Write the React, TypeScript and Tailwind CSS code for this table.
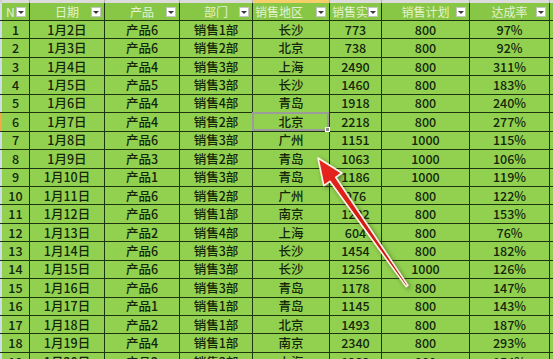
import React from "react";

const cols = "grid-cols-[2px_28px_75px_75px_73px_77px_52px_88px_80px_3px]";

const headers = ["N", "日期", "产品", "部门", "销售地区", "销售实", "销售计划", "达成率"];

const rows: string[][] = [
  ["1", "1月2日", "产品6", "销售1部", "长沙", "773", "800", "97%"],
  ["2", "1月3日", "产品6", "销售2部", "北京", "738", "800", "92%"],
  ["3", "1月4日", "产品4", "销售3部", "上海", "2490", "800", "311%"],
  ["4", "1月5日", "产品5", "销售3部", "长沙", "1460", "800", "183%"],
  ["5", "1月6日", "产品4", "销售4部", "青岛", "1918", "800", "240%"],
  ["6", "1月7日", "产品4", "销售2部", "北京", "2218", "800", "277%"],
  ["7", "1月8日", "产品6", "销售3部", "广州", "1151", "1000", "115%"],
  ["8", "1月9日", "产品3", "销售2部", "青岛", "1063", "1000", "106%"],
  ["9", "1月10日", "产品1", "销售3部", "青岛", "1186", "1000", "119%"],
  ["10", "1月11日", "产品6", "销售2部", "广州", "976", "800", "122%"],
  ["11", "1月12日", "产品6", "销售1部", "南京", "1222", "800", "153%"],
  ["12", "1月13日", "产品2", "销售4部", "上海", "604", "800", "76%"],
  ["13", "1月14日", "产品6", "销售3部", "长沙", "1454", "800", "182%"],
  ["14", "1月15日", "产品6", "销售3部", "长沙", "1256", "1000", "126%"],
  ["15", "1月16日", "产品6", "销售3部", "青岛", "1178", "800", "147%"],
  ["16", "1月17日", "产品1", "销售1部", "青岛", "1145", "800", "143%"],
  ["17", "1月18日", "产品2", "销售1部", "北京", "1493", "800", "187%"],
  ["18", "1月19日", "产品4", "销售1部", "南京", "2340", "800", "293%"],
  ["19", "1月20日", "产品2", "销售3部", "上海", "1232", "800", "154%"],
];

function FilterButton() {
  return (
    <span className="absolute bottom-[3px] right-[3px] flex h-[10px] w-[10px] items-center justify-center border border-[#c4c4c4] bg-white">
      <span className="h-0 w-0 border-x-[3px] border-t-[3px] border-x-transparent border-t-[#3a3a3a]" />
    </span>
  );
}

function Arrow() {
  return (
    <svg className="pointer-events-none absolute left-0 top-0" width="553" height="359">
      <defs>
        <filter id="sh" x="-20%" y="-20%" width="140%" height="140%">
          <feDropShadow dx="2" dy="2" stdDeviation="2" floodColor="#2a3a10" floodOpacity="0.55" />
        </filter>
        <linearGradient id="rd" x1="0" y1="0" x2="1" y2="1">
          <stop offset="0" stopColor="#e8261e" />
          <stop offset="1" stopColor="#c0140f" />
        </linearGradient>
      </defs>
      <polygon
        points="318,158 341.8,173 335.7,177.3 407.8,285.4 406.2,286.6 329.9,181.3 323.8,185.6"
        fill="url(#rd)"
        stroke="#fdf4e8"
        strokeWidth="1.6"
        strokeLinejoin="round"
        filter="url(#sh)"
      />
    </svg>
  );
}

export default function App() {
  return (
    <div
      className="relative h-[359px] w-[553px] overflow-hidden bg-[#92d050]"
      style={{ fontFamily: '"Noto Sans CJK SC", "Noto Sans", sans-serif' }}
    >
      {/* column letters strip */}
      <div className={`grid h-[3px] ${cols} bg-[#dcdcdc]`}>
        <div className="bg-[#d0d0d0]" />
        <div className="border-r border-[#b0b0b0]" />
        <div className="border-r border-[#b0b0b0]" />
        <div className="border-r border-[#b0b0b0]" />
        <div className="border-r border-[#b0b0b0]" />
        <div className="border-r border-[#b0b0b0] bg-[#f5cf6a]" />
        <div className="border-r border-[#b0b0b0]" />
        <div className="border-r border-[#b0b0b0]" />
        <div className="border-r border-[#b0b0b0]" />
        <div />
      </div>

      {/* header row */}
      <div className={`grid h-[18px] ${cols} border-b border-[#1d3410] bg-[#88c646] text-[12px] leading-[16px] text-[#e4f2d4]`}>
        <div className="bg-[#d4dde6]" />
        {headers.map((h, i) => (
          <div
            key={h}
            className={`relative flex items-center whitespace-nowrap border-r border-[#1d3410] ${i === 0 ? "pl-[4px]" : i === 4 || i === 5 ? "pl-[2px]" : "justify-center"}`}
          >
            <span>{h}</span>
            <FilterButton />
          </div>
        ))}
        <div />
      </div>

      {/* body rows */}
      {rows.map((r, ri) => (
        <div
          key={r[0]}
          className={`grid h-[18.45px] ${cols} border-b border-[#1d3410] text-[12.5px] font-medium leading-[16px] text-[#14260a]`}
        >
          <div className={ri === 5 ? "bg-[#f2a94a]" : "bg-[#cfdde9]"} />
          {r.map((c, ci) => (
            <div
              key={ci}
              className="relative flex items-center justify-center whitespace-nowrap border-r border-[#1d3410]"
            >
              {c}
              {ri === 5 && ci === 4 && (
                <span className="absolute -left-[1px] -top-[1px] bottom-0 right-0 border-2 border-[#9c9c9c]">
                  <span className="absolute -bottom-[3px] -right-[3px] h-[5px] w-[5px] border border-white bg-[#8a8a8a]" />
                </span>
              )}
            </div>
          ))}
          <div />
        </div>
      ))}

      <Arrow />
    </div>
  );
}
